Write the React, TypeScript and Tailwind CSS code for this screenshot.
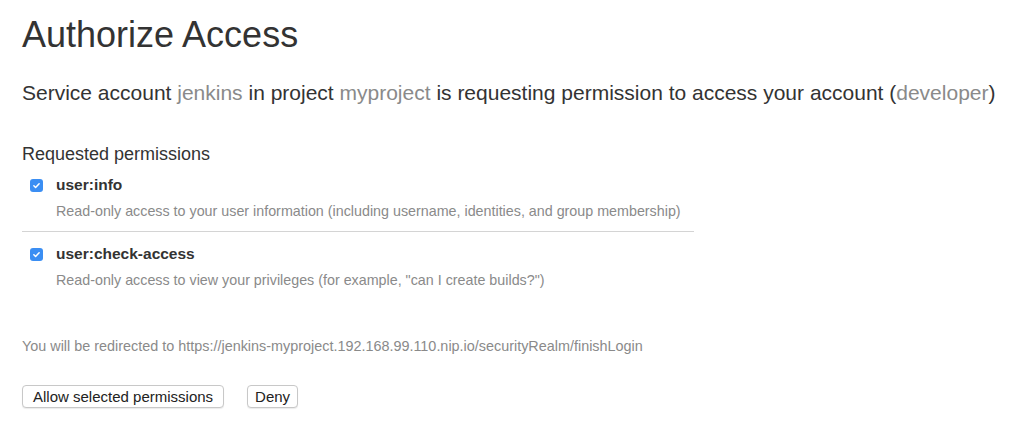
import React from 'react';

const CheckBox: React.FC = () => (
  <span className="flex h-[13px] w-[13px] items-center justify-center rounded-[3px] bg-[#3b8ef3]">
    <svg viewBox="0 0 12 12" className="h-[9px] w-[9px]" fill="none" stroke="white" strokeWidth={2} strokeLinecap="round" strokeLinejoin="round">
      <path d="M2.5 6.3l2.3 2.3 4.7-5" />
    </svg>
  </span>
);

const Permission: React.FC<{ name: string; desc: string; className?: string }> = ({ name, desc, className }) => (
  <div className={className}>
    <label className="flex items-center pl-[8px]">
      <CheckBox />
      <span className="ml-[13px] text-[15.5px] leading-[18px] font-bold text-[#333]">{name}</span>
    </label>
    <p className="mt-[9px] pl-[34px] text-[14.3px] leading-[16px] text-[#8a8a8a]">{desc}</p>
  </div>
);

export default function App() {
  return (
    <div className="min-h-[438px] bg-white px-[22px] pt-[15px] font-['Liberation_Sans',Arial,sans-serif] text-[#333]">
      <h1 className="text-[36px] leading-[40px] font-normal">Authorize Access</h1>
      <p className="mt-[26px] whitespace-nowrap text-[21px] leading-[24px]">
        Service account <span className="text-[#8a8a8a]">jenkins</span> in project{' '}
        <span className="text-[#8a8a8a]">myproject</span> is requesting permission to access your account (
        <span className="text-[#8a8a8a]">developer</span>)
      </p>
      <h3 className="mt-[39px] text-[18px] leading-[20px]">Requested permissions</h3>
      <div className="w-[672px]">
        <Permission
          className="mt-[12px]"
          name="user:info"
          desc="Read-only access to your user information (including username, identities, and group membership)"
        />
        <div className="mt-[12px] border-t border-[#d4d4d4]" />
        <Permission
          className="mt-[13px]"
          name="user:check-access"
          desc={'Read-only access to view your privileges (for example, "can I create builds?")'}
        />
      </div>
      <p className="mt-[50px] text-[14.4px] leading-[16px] text-[#8a8a8a]">
        You will be redirected to https://jenkins-myproject.192.168.99.110.nip.io/securityRealm/finishLogin
      </p>
      <div className="mt-[31px] flex gap-[23px]">
        <button className="h-[23px] rounded-[4px] border border-[#c8c8c8] bg-white px-[10px] text-[15px] leading-[21px] text-[#222] shadow-[0_1px_1px_rgba(0,0,0,0.08)]">
          Allow selected permissions
        </button>
        <button className="h-[23px] rounded-[4px] border border-[#c8c8c8] bg-white px-[7px] text-[15px] leading-[21px] text-[#222] shadow-[0_1px_1px_rgba(0,0,0,0.08)]">
          Deny
        </button>
      </div>
    </div>
  );
}
